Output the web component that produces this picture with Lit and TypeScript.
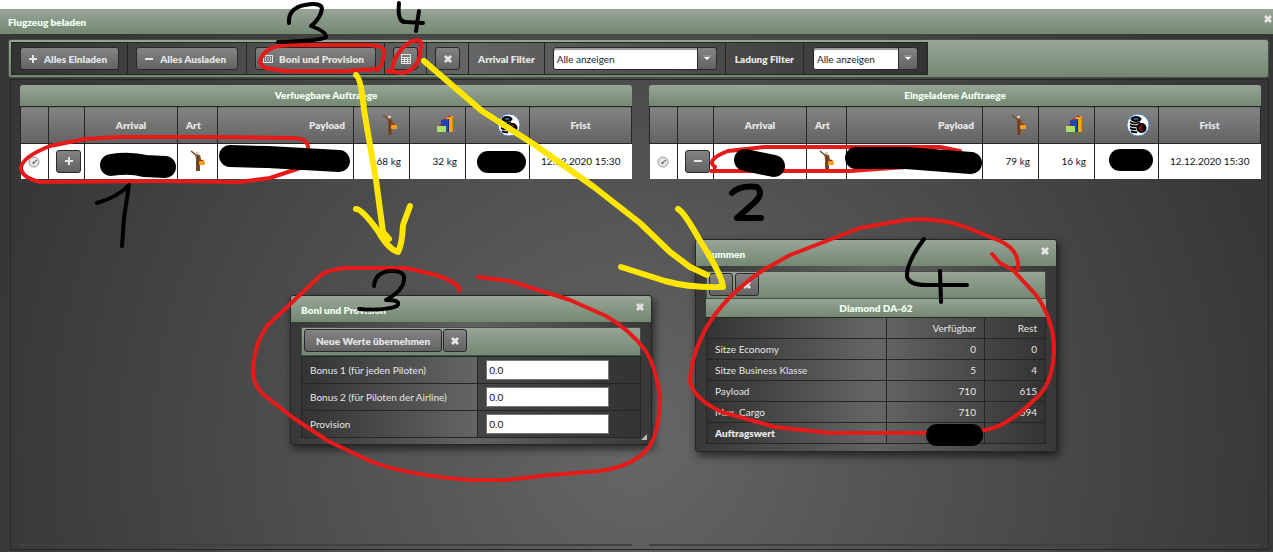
import { LitElement, html, svg, css } from "lit";
import { customElement } from "lit/decorators.js";

const plus = svg`<path d="M4 1h2v3h3v2H6v3H4V6H1V4h3z"/>`;
const minus = svg`<path d="M1 4h8v2H1z"/>`;
const cross = svg`<path d="M3 1l2 2 2-2 2 2-2 2 2 2-2 2-2-2-2 2-2-2 2-2-2-2z"/>`;
const money = svg`<path fill-rule="evenodd" d="M0 1h10v8H0zM1 2v6h2V7H2V3h1V2zM7 2v1h1v4H7v1h2V2zM5 2a2.4 3 0 000 6 2.4 3 0 000-6zM4.500 3.500h1v3h-1z"/>`;
const calc = svg`<path fill-rule="evenodd" d="M0 0h10v10H0zM1 1v2h8V1zM1 4v1h2V4zM4 4v1h2V4zM7 4v1h2V4zM1 6v1h2V6zM4 6v1h2V6zM7 6v1h2V6zM1 8v1h2V8zM4 8v1h2V8zM7 8v1h2V8z"/>`;
const glyph = (g: unknown) => html`<svg class="glyph" viewBox="0 0 10 10" aria-hidden="true">${g}</svg>`;

const person = html`<svg class="pic" viewBox="0 0 22 22" aria-hidden="true">
  <path d="M4 1l5 4" stroke="#7a4a22" stroke-width="1.600"/><circle cx="10.500" cy="3" r="1.600" fill="#d8cdb8"/>
  <path d="M8 4l5 1 1 4v3h-1v9H9V9z" fill="#80502a"/><path d="M11 6v15" stroke="#5a3418"/>
  <rect x="12" y="11" width="6" height="4" rx="1" fill="#f2a21c"/><path d="M13 11q2-3 4 0z" fill="#d11a1a"/></svg>`;
const bags = html`<svg class="pic" viewBox="0 0 22 22" aria-hidden="true">
  <path d="M12 3l6-1v16h-6z" fill="#f5a623"/><path d="M18 3v15" stroke="#b87008"/>
  <path d="M6 6l8-1v13H6z" fill="#2344b4"/><path d="M13.500 5v13" stroke="#142b80"/>
  <rect x="2" y="12" width="9" height="6" fill="#a8e06a"/>
  <path d="M4 12q2-3 4 0zM8 6q2-3 4 0zM12 3q2-3 4 0z" fill="#d11a1a"/></svg>`;
const coins = html`<svg class="pic coin" viewBox="0 0 24 24" aria-hidden="true">
  <circle cx="12" cy="12" r="11" fill="#fff" stroke="#4d83c7"/>
  <ellipse cx="10" cy="6" rx="5.500" ry="3" /><ellipse cx="10" cy="6" rx="2.500" ry="1" fill="#2464b8"/>
  <path d="M4 9q5 3 10 0M4 12q4 2 7 1M4 15q4 2 6 1M5 18q3 2 6 1" stroke="#000" stroke-width="2" fill="none"/>
  <circle cx="15.500" cy="15" r="5"/><path d="M17.500 13q-3-2-4 2 1 4 4 2M12.500 15h4" stroke="#d11a1a" fill="none"/></svg>`;
const gauge = html`<svg class="gauge" viewBox="0 0 12 12" aria-hidden="true">
  <circle cx="6" cy="6" r="5" fill="#e6e6e6" stroke="#9a9a9a"/><path d="M5 7l4-3" stroke="#444"/><circle cx="5.500" cy="7" r="1" fill="#555"/></svg>`;

@customElement("app-root")
export class AppRoot extends LitElement {
  static styles = css`
    :host { display: block; position: relative; min-height: 100vh; padding-top: 9px; box-sizing: border-box;
      background: #fff; font: 10px/14px Lato, "Open Sans", sans-serif; color: #e6e6e6; }
    * { box-sizing: border-box; }
    .window { display: flex; flex-direction: column; min-height: calc(100vh - 9px);
      background: radial-gradient(circle 660px at 50% 80%, #666, #373737); }
    .title, .cell, .btn, .orders caption, .orders th, .totals caption { font-weight: 800; }
    .green { background: linear-gradient(#97a596, #748873); color: #f0fff0; }
    .title { display: flex; justify-content: space-between; height: 25px; padding: 0 0 0 8px; line-height: 27px; }
    .close { appearance: none; border: 0; padding: 0; background: none; width: 11px; height: 20px; display: flex; align-items: center; justify-content: center; }
    .glyph { width: 10px; height: 10px; fill: #e4e4e4; flex: none; }
    .body { flex: 1; display: flex; flex-direction: column; padding: 5px 4px 2px 8px; }
    .bar { display: flex; height: 39px; padding: 2px; border: 1px solid #435143; border-radius: 3px; }
    .cells { display: flex; border: 1px solid #262626; background: linear-gradient(90deg, #333, #646464 50%, #333); color: #e6e6e6; }
    .cell { display: flex; align-items: center; padding: 0 8px; border-right: 1px solid #262626; white-space: nowrap; }
    .cell.text { padding: 0 9px; }
    .cell:last-child { border-right: 0; }
    .btn { appearance: none; display: flex; align-items: center; justify-content: center; gap: 6px; height: 23px; margin: 0;
      padding: 0 11px 0 7px; border: 1px solid #292929; border-radius: 3px; color: #e4e4e4; white-space: nowrap;
      background: linear-gradient(#838383, #636363); font-family: inherit; font-size: 10px; line-height: 14px; }
    .sq { width: 25px; padding: 0; }
    .pick { position: relative; display: flex; height: 23px; }
    .wide { width: 164px; } .slim { width: 105px; }
    .pick select { appearance: none; width: 100%; border: 1px solid #292929; border-radius: 3px; padding: 0 22px 0 3px; background: #fff;
      box-shadow: inset 0 2px 1px #999; color: #222; font: inherit; font-weight: normal; }
    .arrow { position: absolute; right: 0; top: 0; width: 20px; height: 23px; border: 1px solid #292929; border-radius: 0 3px 3px 0;
      background: linear-gradient(#838383, #636363); pointer-events: none; display: flex; justify-content: center; align-items: center; }
    .arrow svg { width: 8px; height: 7px; }
    .panel { flex: 1; display: grid; grid-template-columns: 1fr 1fr; column-gap: 17px; margin-top: 1px; margin-left: 2px; padding: 5px 7px 3px 9px;
      border: 1px solid #262626; }
    .side { border-bottom: 2px solid #3d433a; }
    .orders { width: 100%; table-layout: fixed; border-collapse: collapse; }
    .orders caption { height: 21px; line-height: 21px; border-radius: 3px 3px 0 0; }
    .orders th { height: 37px; padding: 0 8px; border: 1px solid #262626; background: linear-gradient(#838383, #636363); vertical-align: middle; }
    .orders td { height: 35px; padding: 0 8px; background: #fff; color: #111; border-right: 1px solid #262626; text-align: center; white-space: nowrap; }
    .orders td:last-child { border-right: 0; }
    .orders .end { text-align: right; }
    .orders .start { text-align: left; }
    .orders .tight { padding: 0; }
    .orders .act { padding: 0 0 0 7px; }
    .pic { width: 22px; height: 22px; display: inline-block; vertical-align: middle; }
    .coin { width: 24px; height: 24px; }
    .gauge { width: 12px; height: 12px; vertical-align: middle; }
    .dialog { position: absolute; width: 362px; border: 1px solid #262626; border-radius: 3px; box-shadow: 2px 4px 8px rgba(0,0,0,.6);
      background: linear-gradient(90deg, #383838, #626262 50%, #383838); }
    .dialog .title { height: 26px; line-height: 28px; padding: 0 6px 0 10px; border-radius: 2px 2px 0 0; }
    .dialog .close { height: 22px; }
    .boni { left: 290px; top: 295px; }
    .sums { left: 695px; top: 239px; }
    .inner { padding: 5px 10px 7px; }
    .tools { display: flex; gap: 1px; height: 28px; padding: 1px 2px; border: 1px solid #435143; }
    .boni .tools { height: 29px; }
    .boni .inner { padding-bottom: 6px; }
    .boni .btn { padding: 0 11px; height: 23px; }
    .dialog .sq { width: 24px; padding: 0; }
    .dialog .sq + .sq { margin-left: 1px; }
    .grid { width: 100%; table-layout: fixed; border-collapse: collapse; background: linear-gradient(90deg, #333, #656565 50%, #333); }
    .grid th, .grid td { border: 1px solid #262626; padding: 0 8px; text-align: left; font-weight: normal; }
    .form { background: linear-gradient(90deg, #333, #656565 52%, #444 52%, #333); }
    .form th, .form td { height: 27px; }
    .form input { display: block; width: 123px; height: 20px; padding: 0 2px; border: 1px solid #777; background: #fff; color: #111; font: inherit; }
    .totals caption { height: 18px; line-height: 18px; }
    .totals th, .totals td { height: 21px; }
    .totals .n { text-align: right; }
    .totals .strong { font-weight: 800; }
    .grip { position: absolute; right: 4px; bottom: 4px; width: 6px; height: 6px; }
    .marks { position: absolute; left: 0; top: 0; width: 1273px; height: 552px; pointer-events: none; fill: none; stroke-linecap: round; stroke-linejoin: round; }
    .red { stroke: #e71a1a; stroke-width: 4; }
    .yellow { stroke: #ffe600; stroke-width: 6; }
    .ink { stroke: #000; stroke-width: 4; }
    .bold { stroke-width: 6; }
    .blot { stroke: #000; stroke-width: 22; }
  `;

  private order(title: string, icon: unknown, label: string, a: string, b: string) {
    return html`<section class="side"><table class="orders">
      <caption class="green">${title}</caption>
      <colgroup>${[28, 36, 93, 40, 136, 56, 56, 64, 102].map((w) => html`<col style="width:${(w / 611) * 100}%">`)}</colgroup>
      <thead><tr><th></th><th></th><th>Arrival</th><th class="start">Art</th><th class="end">Payload</th>
        <th class="end">${person}</th><th class="end">${bags}</th><th class="end">${coins}</th><th>Frist</th></tr></thead>
      <tbody><tr><td class="tight">${gauge}</td><td class="act"><button class="btn sq" aria-label=${label}>${glyph(icon)}</button></td>
        <td></td><td>${person}</td><td></td><td class="end">${a}</td><td class="end">${b}</td><td></td><td>12.12.2020 15:30</td></tr></tbody>
    </table></section>`;
  }

  private pick(id: string, size: string) {
    return html`<div class="pick ${size}"><select id=${id}><option>Alle anzeigen</option></select>
      <span class="arrow"><svg viewBox="0 0 8 7"><path d="M0 1h8" stroke="#aaa"/><path d="M1 2h6L4 5z" fill="#fff"/></svg></span></div>`;
  }

  private close() {
    return html`<button class="close" aria-label="Schließen">${glyph(cross)}</button>`;
  }

  render() {
    const sums = [["Sitze Economy", "0", "0"], ["Sitze Business Klasse", "5", "4"], ["Payload", "710", "615"], ["Max. Cargo", "710", "694"]];
    const bonus = ["Bonus 1 (für jeden Piloten)", "Bonus 2 (für Piloten der Airline)", "Provision"];
    return html`
      <main class="window">
        <header class="title green"><span>Flugzeug beladen</span>${this.close()}</header>
        <div class="body">
          <div class="bar green"><div class="cells">
            <div class="cell"><button class="btn">${glyph(plus)}Alles Einladen</button></div>
            <div class="cell"><button class="btn">${glyph(minus)}Alles Ausladen</button></div>
            <div class="cell"><button class="btn">${glyph(money)}Boni und Provision</button></div>
            <div class="cell"><button class="btn sq" aria-label="Summen">${glyph(calc)}</button></div>
            <div class="cell"><button class="btn sq" aria-label="Schließen">${glyph(cross)}</button></div>
            <div class="cell text"><label for="arrival">Arrival Filter</label></div>
            <div class="cell">${this.pick("arrival", "wide")}</div>
            <div class="cell text"><label for="load">Ladung Filter</label></div>
            <div class="cell text">${this.pick("load", "slim")}</div>
          </div></div>
          <div class="panel">
            ${this.order("Verfuegbare Auftraege", plus, "Einladen", "68 kg", "32 kg")}
            ${this.order("Eingeladene Auftraege", minus, "Ausladen", "79 kg", "16 kg")}
          </div>
        </div>
      </main>

      <section class="dialog boni">
        <header class="title green"><span>Boni und Provision</span>${this.close()}</header>
        <div class="inner">
          <div class="tools green"><button class="btn">Neue Werte übernehmen</button><button class="btn sq" aria-label="Schließen">${glyph(cross)}</button></div>
          <table class="grid form"><colgroup><col style="width:52%"><col></colgroup>
            ${bonus.map((b, i) => html`<tr><th><label for="b${i}">${b}</label></th><td><input id="b${i}" value="0.0"></td></tr>`)}
          </table>
        </div>
        <svg class="grip" viewBox="0 0 6 6"><path d="M6 0v6H0z" fill="#bbb"/></svg>
      </section>

      <section class="dialog sums">
        <header class="title green"><span>Summen</span>${this.close()}</header>
        <div class="inner">
          <div class="tools green"><button class="btn sq" aria-label="Aktualisieren">${glyph(minus)}</button><button class="btn sq" aria-label="Schließen">${glyph(cross)}</button></div>
          <table class="grid totals"><caption class="green">Diamond DA-62</caption>
            <colgroup><col style="width:53%"><col style="width:29%"><col></colgroup>
            <tr><td></td><th class="n">Verfügbar</th><th class="n">Rest</th></tr>
            ${sums.map((r) => html`<tr><th>${r[0]}</th><td class="n">${r[1]}</td><td class="n">${r[2]}</td></tr>`)}
            <tr><th class="strong">Auftragswert</th><td></td><td></td></tr>
          </table>
        </div>
      </section>

      <svg class="marks" viewBox="0 0 1273 552" aria-hidden="true">
        <g class="red">
          <path d="M308 147Q307 138 292 138L210 137 120 137 85 139 50 146Q22 157 21 168 22 178 40 182L160 181 240 182 270 178 300 168"/>
          <path d="M377 70Q384 65 384 50 382 45 365 45H290Q265 45 260 61 260 68 272 69L285 71 345 71 377 69"/>
          <path d="M387 71L403 73Q416 70 420 56L421 43Q420 38 410 42 395 52 392 69"/>
          <path d="M715 167Q705 160 728 151L765 147 940 147 960 151M711 171H850L920 166"/>
          <path d="M459 291Q462 284 436 275L406 268H346Q326 270 320 276L268 325Q254 343 253 371 253 385 264 395L292 417 328 441 370 461Q405 475 470 480H505L550 475 600 471Q640 465 652 442 660 425 660 395 655 365 645 350 630 330 606 316L570 300 510 281 478 277"/>
          <path d="M1018 269Q1020 250 1000 241L963 226Q935 217 905 220L860 228 790 255 765 269Q725 295 705 330 690 360 690 382 695 400 722 412L775 427 830 433H920L985 430Q1007 427 1035 399 1053 385 1054 350 1054 320 1036 295L1013 270 1000 263 992 254"/>
        </g>
        <g class="yellow">
          <path d="M356 75Q361 78 364 110L376 180 383 232 389 239"/>
          <path d="M356 209Q362 209 378 231 388 249 398 252 402 245 403 225L410 206"/>
          <path d="M424 61L482 111 535 145 594 187 640 223 670 252 690 267 707 275"/>
          <path d="M621 267L665 281Q690 288 723 287 722 275 699 239 684 212 678 209"/>
        </g>
        <g class="ink">
          <path d="M289 23Q288 8 305 5 322 2 322 9 320 19 311 26 327 32 326 37 320 41 278 42"/>
          <path d="M399 3Q397 23 406 22L423 23M419 11L416 31"/>
          <path d="M374 286Q375 273 389 271 405 270 404 279 404 290 386 300 402 300 397 306 385 311 359 309"/>
          <path d="M924 239Q906 263 907 277 910 285 925 285H967M940 271L941 302"/>
          <path d="M97 203Q118 197 129 185L124 218 122 246"/>
        </g>
        <path class="ink bold" d="M732 193Q740 185 757 187 764 193 755 202L737 218H761"/>
        <g class="blot">
          <path d="M111 165Q130 162 145 166L165 167"/><path d="M230 156L268 157 339 161"/>
          <path d="M745 160L774 166"/><path d="M856 158H906L971 163"/>
          <path d="M488 162H515"/><path d="M1120 160H1142"/><path d="M937 435H972"/>
        </g>
      </svg>`;
  }
}
